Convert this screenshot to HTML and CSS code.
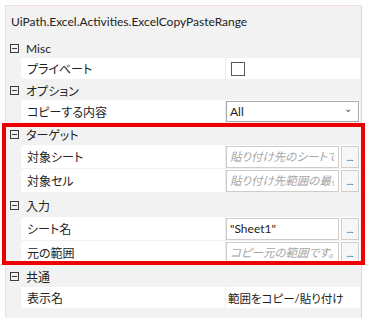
FILE: index.html
```html
<!DOCTYPE html>
<html lang="ja">
<head>
  <meta charset="UTF-8">
  <meta name="viewport" content="width=device-width, initial-scale=1.0">
  <title>プロパティ</title>
  <link rel="stylesheet" href="styles.css">
</head>
<body>
  <div class="panel">
    <div class="title">UiPath.Excel.Activities.ExcelCopyPasteRange</div>

    <div class="category cat-misc"><span class="toggle"></span>Misc</div>
    <div class="prop">
      <div class="prop-name">プライベート</div>
      <div class="prop-value"><span class="checkbox"></span></div>
    </div>

    <div class="category cat-option"><span class="toggle"></span>オプション</div>
    <div class="prop prop-tall">
      <div class="prop-name">コピーする内容</div>
      <div class="prop-value">
        <div class="dropdown">All<span class="chevron">&#8964;</span></div>
      </div>
    </div>

    <div class="category cat-wide"><span class="toggle"></span>ターゲット</div>
    <div class="prop prop-input">
      <div class="prop-name">対象シート</div>
      <div class="prop-value">
        <div class="textbox placeholder"><span class="clip">貼り付け先のシートです。</span></div>
        <div class="more">...</div>
      </div>
    </div>
    <div class="prop prop-input">
      <div class="prop-name">対象セル</div>
      <div class="prop-value">
        <div class="textbox placeholder"><span class="clip">貼り付け先範囲の最初のセルです。</span></div>
        <div class="more">...</div>
      </div>
    </div>

    <div class="category cat-input"><span class="toggle"></span>入力</div>
    <div class="prop prop-input">
      <div class="prop-name">シート名</div>
      <div class="prop-value">
        <div class="textbox">"Sheet1"</div>
        <div class="more">...</div>
      </div>
    </div>
    <div class="prop prop-input">
      <div class="prop-name">元の範囲</div>
      <div class="prop-value">
        <div class="textbox placeholder">コピー元の範囲です。</div>
        <div class="more">...</div>
      </div>
    </div>

    <div class="category cat-wide"><span class="toggle"></span>共通</div>
    <div class="prop">
      <div class="prop-name">表示名</div>
      <div class="prop-value value-text">範囲をコピー/貼り付け</div>
    </div>
  </div>

  <div class="highlight"></div>
</body>
</html>
```

FILE: styles.css
```css
body {
  margin: 0;
  background-color: #ffffff;
  font-family: Lato, "Noto Sans CJK JP", sans-serif;
  font-size: 12px;
  color: #222222;
  font-feature-settings: "palt";
}
.panel {
  margin: 5px 0 0 5px;
  width: 357px;
  height: 313px;
  box-sizing: border-box;
  background-color: #f2f2f2;
  border-top: 1px solid #f5dde2;
  border-left: 1px solid #e2e2e2;
  border-right: 1px solid #d6d6d6;
}
.title {
  height: 32px;
  line-height: 32px;
  padding-left: 5px;
  white-space: nowrap;
}
.category {
  display: flex;
  align-items: center;
  height: 20px;
  padding-left: 4px;
}
.cat-wide {
  height: 22px;
}
.cat-input {
  height: 24px;
}
.toggle {
  position: relative;
  width: 9px;
  height: 9px;
  box-sizing: border-box;
  border: 1px solid #3c3c3c;
  margin-right: 7px;
}
.toggle::after {
  content: "";
  position: absolute;
  left: 1px;
  top: 3px;
  width: 5px;
  height: 1px;
  background-color: #3c3c3c;
}
.prop {
  display: flex;
  height: 21px;
  margin: 0 1px 1px 15px;
}
.prop-tall {
  height: 22px;
}
.prop-input {
  height: 23px;
}
.prop-name {
  flex: 0 0 198px;
  display: flex;
  align-items: center;
  padding-left: 6px;
  background-color: #ffffff;
}
.prop-value {
  flex: 1;
  display: flex;
  align-items: center;
  min-width: 0;
  background-color: #ffffff;
  border-left: 1px solid #ececec;
}
.value-text {
  padding-left: 2px;
  font-size: 11.5px;
}
.checkbox {
  width: 14px;
  height: 14px;
  box-sizing: border-box;
  margin-left: 5px;
  border: 1px solid #5a5a5a;
  background-color: #ffffff;
}
.dropdown {
  position: relative;
  flex: 1;
  height: 21px;
  box-sizing: border-box;
  margin-right: 1px;
  padding-left: 3px;
  line-height: 19px;
  border: 1px solid #a9a9a9;
  background-color: #ffffff;
}
.chevron {
  position: absolute;
  right: 6px;
  top: -3px;
  font-size: 10px;
  color: #555555;
}
.textbox {
  flex: 1;
  min-width: 0;
  height: 22px;
  box-sizing: border-box;
  padding-left: 3px;
  line-height: 20px;
  border: 1px solid #cdcdcd;
  background-color: #ffffff;
  white-space: nowrap;
  overflow: hidden;
}
.placeholder {
  color: #a5a5a5;
  font-style: italic;
  font-size: 11.5px;
}
.clip {
  display: block;
  width: 104px;
  overflow: hidden;
}
.more {
  flex: 0 0 18px;
  height: 22px;
  box-sizing: border-box;
  margin: 0 1px 0 2px;
  border: 1px solid #cfcfcf;
  background-color: #f7f7f7;
  text-align: center;
  font-size: 9px;
  line-height: 22px;
  color: #333333;
}
.highlight {
  position: absolute;
  left: 2px;
  top: 123px;
  width: 363px;
  height: 142px;
  box-sizing: border-box;
  border: 4px solid #ee0000;
}
```
